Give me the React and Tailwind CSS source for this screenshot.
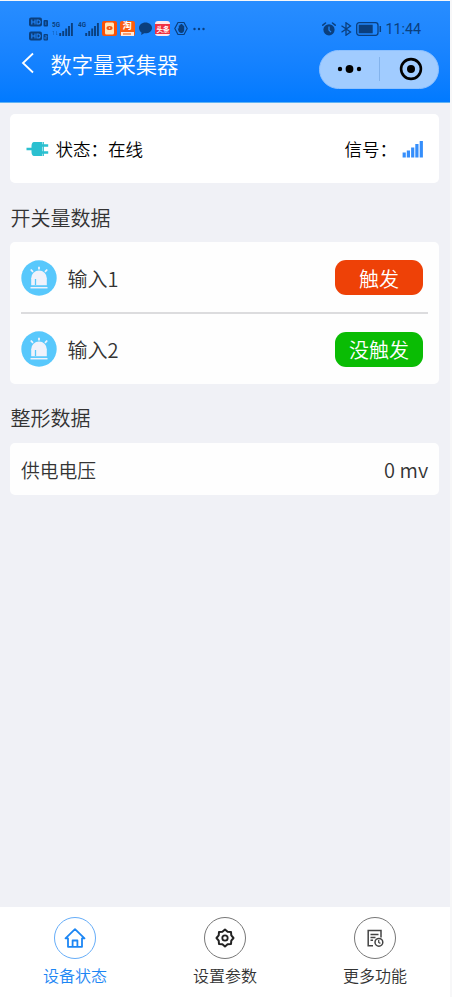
const inputs = [
  { id: 1, name: '输入1', active: true },
  { id: 2, name: '输入2', active: false },
]

const ink = '#0b3f7d'

function HdBadge({ n }) {
  return (
    <svg width="20" height="10" viewBox="0 0 20 10">
      <rect x="0" y="0.5" width="13" height="9" rx="2" fill={ink} />
      <path d="M2.8 2.5v5M6 2.5v5M2.8 5h3.2M8 3h1.2a2 2 0 0 1 0 4H8z" fill="none" stroke="#2286fb" strokeWidth="1.1" />
      <rect x="14.5" y="3" width="4.5" height="6.5" rx="1" fill={ink} />
      <path d={n === 1 ? 'M16.8 4.5v3.5' : 'M15.8 4.8h2v1.4h-2v1.6h2'} fill="none" stroke="#2286fb" strokeWidth="0.7" />
    </svg>
  )
}

function MobileSignal({ label }) {
  return (
    <div className="relative h-[14px] w-[21px]">
      <span className="absolute left-0 top-[-1px] origin-top-left scale-x-80 font-['Roboto',sans-serif] text-[8px] font-bold leading-[8px] text-[#0b3f7d]">{label}</span>
      <svg className="absolute left-0 top-0" width="21" height="14" viewBox="0 0 21 14">
        <path d="M8.2 14v-3M11.2 14v-5M14.2 14V6.500M17 14V4M19.900 14V1" stroke={ink} strokeWidth="1.9" />
        {label === '5G' && <path d="M1.500 9v4M0.500 10l1-1M4.500 9v4M5.500 12l-1 1" stroke={ink} strokeWidth="0.6" opacity="0.5" fill="none" />}
      </svg>
    </div>
  )
}

function StatusBar() {
  return (
    <div className="flex h-[28px] items-center pl-[28.500px] pr-[29px]">
      <div className="flex flex-col gap-1">
        <HdBadge n={1} />
        <HdBadge n={2} />
      </div>
      <div className="ml-[3.500px] flex gap-[5px]">
        <MobileSignal label="5G" />
        <MobileSignal label="4G" />
      </div>

      {/* Notification icons */}
      <div className="ml-[3px] flex items-center gap-[2.800px]">
        <svg width="15" height="15" viewBox="0 0 15 15">
          <rect width="15" height="15" rx="2" fill="#fa5207" />
          <rect x="3" y="1.500" width="9" height="12" rx="1.500" fill="#ffe5b8" />
          <ellipse cx="7.500" cy="7" rx="3" ry="2" fill="#f45412" />
          <circle cx="7.500" cy="7" r="0.8" fill="#ffe5b8" />
        </svg>
        <div className="relative h-[15px] w-[15px] rounded-[2px] bg-[#fa5d10]">
          <span className="absolute left-[3px] top-[-2px] text-[9px] font-bold leading-[14px] text-white">淘</span>
          <span className="absolute bottom-0 left-px flex h-[4px] w-[13px] items-center justify-center bg-[#ffe9db]">
            <span className="h-[2px] w-[8px] bg-[#fa9d6b]" />
          </span>
        </div>
        <svg width="15" height="15" viewBox="0 0 15 15">
          <path d="M7.500 1.500C3.800 1.500 1 3.900 1 7c0 1.900 1 3.500 2.500 4.500L3.200 14l3-1.700C11 12.700 14 10.300 14 7c0-3.100-2.800-5.500-6.500-5.500z" fill={ink} />
        </svg>
        <div className="flex h-[15px] w-[15px] items-center justify-center rounded-[3px] bg-[#ffe6e8]">
          <span className="flex h-[10px] w-[15px] items-center justify-center whitespace-nowrap bg-[#ef3142] text-[6.500px] font-bold leading-[10px] text-white">头条</span>
        </div>
        <svg className="ml-px" width="14" height="15" viewBox="0 0 14 15">
          <path d="M4 1.500h6l3.200 6-3.200 6H4l-3.200-6z" fill="none" stroke={ink} strokeWidth="1.2" strokeLinejoin="round" />
          <path d="M3.800 7l1 .8V4.500h1V3.600h1.200v-.6h1.200v.8h1v1h1v4c0 2-1.100 3.200-2.700 3.200C5.500 12 4 10.500 3.800 7z" fill={ink} />
        </svg>
      </div>
      <svg className="ml-[5px]" width="12" height="4" viewBox="0 0 12 4">
        <g fill={ink}>
          <circle cx="1.500" cy="2" r="1.200" />
          <circle cx="6" cy="2" r="1.200" />
          <circle cx="10.500" cy="2" r="1.200" />
        </g>
      </svg>

      {/* Alarm, bluetooth, battery, clock */}
      <div className="ml-auto flex items-center text-[#0b3f7d]">
        <svg width="14" height="14" viewBox="0 0 14 14">
          <circle cx="7" cy="7.800" r="5.600" fill={ink} />
          <path d="M0.800 3.200L3.500 1M13.200 3.200L10.500 1" stroke={ink} strokeWidth="1.500" strokeLinecap="round" />
          <path d="M7 4.500v3.600l2 2" fill="none" stroke="#2087fb" strokeWidth="1.300" />
        </svg>
        <svg className="ml-[4px]" width="12" height="14" viewBox="0 0 12 14">
          <path d="M1.500 3.800l9 6.200L6 13.200V0.800L10.500 4l-9 6.200" fill="none" stroke={ink} strokeWidth="1.300" />
        </svg>
        <svg className="ml-[4px]" width="26" height="14" viewBox="0 0 26 14">
          <rect x="0.700" y="0.700" width="21.300" height="12.600" rx="2.500" fill="none" stroke={ink} strokeWidth="1.300" />
          <rect x="2.700" y="2.700" width="14" height="8.600" fill={ink} />
          <path d="M24.300 4v6" stroke={ink} strokeWidth="1.500" />
        </svg>
        <span className="ml-[3px] font-['Roboto',sans-serif] text-[14.300px] font-normal leading-[14px]">11:44</span>
      </div>
    </div>
  )
}

function Header() {
  return (
    <header className="h-[102px] border-b border-[#62b3f3] bg-linear-to-b from-[#288dff] to-[#017aff] pt-[13.500px]">
      <StatusBar />
      <div className="mt-[7px] flex h-[39px] items-center pl-[21px] pr-[11px]">
        <svg className="mb-[12px]" width="13" height="22" viewBox="0 0 13 22">
          <path d="M12 1.500L2 11l10 9.500" fill="none" stroke="#fff" strokeWidth="1.800" />
        </svg>
        <h1 className="mb-[10px] ml-[16.500px] text-[21.300px] leading-[30px] text-white">数字量采集器</h1>
        <div className="ml-auto flex h-[39px] w-[120px] items-center rounded-full border border-[#8dc1ff] bg-[#a1ccff]">
          <svg className="ml-[16.500px]" width="26" height="8" viewBox="0 0 26 8">
            <circle cx="3" cy="4" r="2.200" />
            <circle cx="12.500" cy="4" r="3.900" />
            <circle cx="22" cy="4" r="2.200" />
          </svg>
          <span className="ml-[16.500px] h-[24px] w-px bg-[#83b3ec]" />
          <svg className="ml-[18.500px]" width="24" height="24" viewBox="0 0 24 24">
            <circle cx="12" cy="12" r="9.900" fill="none" stroke="#000" strokeWidth="2.600" />
            <circle cx="12" cy="12" r="4" />
          </svg>
        </div>
      </div>
    </header>
  )
}

function PlugIcon() {
  return (
    <svg width="23" height="16" viewBox="0 0 23 16">
      <path d="M0.500 8H7M16 4.500h6.200M16 11.500h6.200" stroke="#2bc0d0" strokeWidth="2.700" />
      <path d="M8 1h8v14H8c-1.600 0-2.500-1.800-2.500-4V5C5.500 2.800 6.400 1 8 1z" fill="#2bc0d0" />
      <path d="M17.200 1v14" stroke="#2bc0d0" strokeWidth="1.400" />
    </svg>
  )
}

function SignalIcon() {
  return (
    <svg width="22" height="18" viewBox="0 0 22 18">
      <path d="M2.200 17.500v-5M6.400 17.500v-7M10.700 17.500V7.500M14.900 17.500V4M19.300 17.500V1" stroke="#358efb" strokeWidth="3.200" />
    </svg>
  )
}

function AlarmIcon() {
  return (
    <svg width="36" height="36" viewBox="0 0 36 36">
      <circle cx="18" cy="18" r="17.700" fill="#58c8fc" />
      <path d="M10.200 25.300v-7a7.800 7.800 0 0 1 15.600 0v7z" fill="#f0f2fb" />
      <path d="M9.500 27.700h17" stroke="#f0f2fb" strokeWidth="1.500" />
      <path d="M14.500 19v6" stroke="#58c8fc" strokeWidth="1.300" />
      <path d="M18 6.800v2.700M9.800 9.500l2.200 2.300M26.200 9.500L24 11.800" stroke="#f0f2fb" strokeWidth="1.800" />
    </svg>
  )
}

function HomeIcon() {
  return (
    <svg width="22" height="22" viewBox="0 0 22 22" fill="none" stroke="#1c86f4" strokeWidth="1.800" strokeLinejoin="round">
      <path d="M1.500 11.300L11 2.200l9.500 9.100H18v8.500H4v-8.500z" />
      <path d="M8.600 19.500v-6h4.800v6" />
    </svg>
  )
}

function GearIcon() {
  return (
    <svg width="20" height="20" viewBox="0 0 20 20" fill="none" stroke="#222" strokeWidth="2" strokeLinejoin="round">
      <path d="M10 1.500L12.600 3.700L16 4L16.300 7.400L18.500 10L16.300 12.600L16 16L12.600 16.300L10 18.500L7.400 16.300L4 16L3.700 12.600L1.500 10L3.700 7.400L4 4L7.400 3.700z" />
      <circle cx="10" cy="10" r="2.700" strokeWidth="1.800" />
    </svg>
  )
}

function MoreIcon() {
  return (
    <svg width="18" height="18" viewBox="0 0 18 18" fill="none" stroke="#444" strokeWidth="1.500">
      <path d="M7 16.700H2.200V1.600h12.800V8.500M4.500 5.500h8M4.500 8.500h5M4.500 11.300h2.500" />
      <circle cx="12.900" cy="13.300" r="3.900" />
      <path d="M12.700 11v2.500l1.700.9" strokeWidth="1.200" />
    </svg>
  )
}

const tabs = [
  { label: '设备状态', Icon: HomeIcon, active: true },
  { label: '设置参数', Icon: GearIcon },
  { label: '更多功能', Icon: MoreIcon },
]

export default function App() {
  return (
    <div className="h-[997px] w-[452px] overflow-hidden bg-[#f7f7f8] pr-[2px] pt-px font-['Noto_Sans_CJK_SC',sans-serif] font-[350]">
      <div className="flex h-[996px] flex-col bg-[#f0f1f6]">
        <Header />

        <main className="flex-1 pl-[10.400px] pr-[11.400px] pt-[11px] text-[#333]">
          {/* Device status */}
          <section className="flex h-[69px] items-center rounded-[5px] bg-white pl-[16px] pr-[15px] text-[17.500px] text-black">
            <PlugIcon />
            <span className="ml-[6px] pt-[2px]">状态：在线</span>
            <span className="ml-auto mr-[4.500px] pt-[2px]">信号：</span>
            <SignalIcon />
          </section>

          <h2 className="flex h-[59px] items-center pt-[10px] text-[20px]">开关量数据</h2>
          <section className="h-[142px] rounded-[5px] bg-[#fefefe] px-[10.500px]">
            {inputs.map(({ id, name, active }) => (
              <div key={id} className="flex h-[71.500px] items-center border-b-2 border-[#dcdcde] pr-[5px] pt-[2px] last:border-transparent">
                <AlarmIcon />
                <span className="ml-[10.500px] pt-[2px] text-[20px]">{name}</span>
                <span className={`ml-auto flex h-[35px] w-[88px] items-center justify-center rounded-[11px] pt-[2px] text-[20px] text-white ${active ? 'bg-[#ee4107]' : 'bg-[#0abc04]'}`}>
                  {active ? '触发' : '没触发'}
                </span>
              </div>
            ))}
          </section>

          <h2 className="flex h-[59px] items-center pt-[9px] text-[20px]">整形数据</h2>
          <section className="flex h-[52px] items-center justify-between rounded-[5px] bg-[#fefefe] px-[10.500px] pt-[2px]">
            <span className="text-[18.800px]">供电电压</span>
            <span className="text-[20px]">0 mv</span>
          </section>
        </main>

        {/* Bottom tabs */}
        <nav className="grid h-[90px] grid-cols-3 bg-white">
          {tabs.map(({ label, Icon, active }) => (
            <div key={label} className={`flex flex-col items-center pt-[10px] ${active ? 'text-[#1c86f4]' : 'text-[#333]'}`}>
              <div className={`flex h-[42px] w-[42px] items-center justify-center rounded-full border ${active ? 'border-[#66adf8]' : 'border-[#777]'}`}>
                <Icon />
              </div>
              <span className="mt-[4px] text-[16px] leading-[24px]">{label}</span>
            </div>
          ))}
        </nav>
      </div>
    </div>
  )
}
